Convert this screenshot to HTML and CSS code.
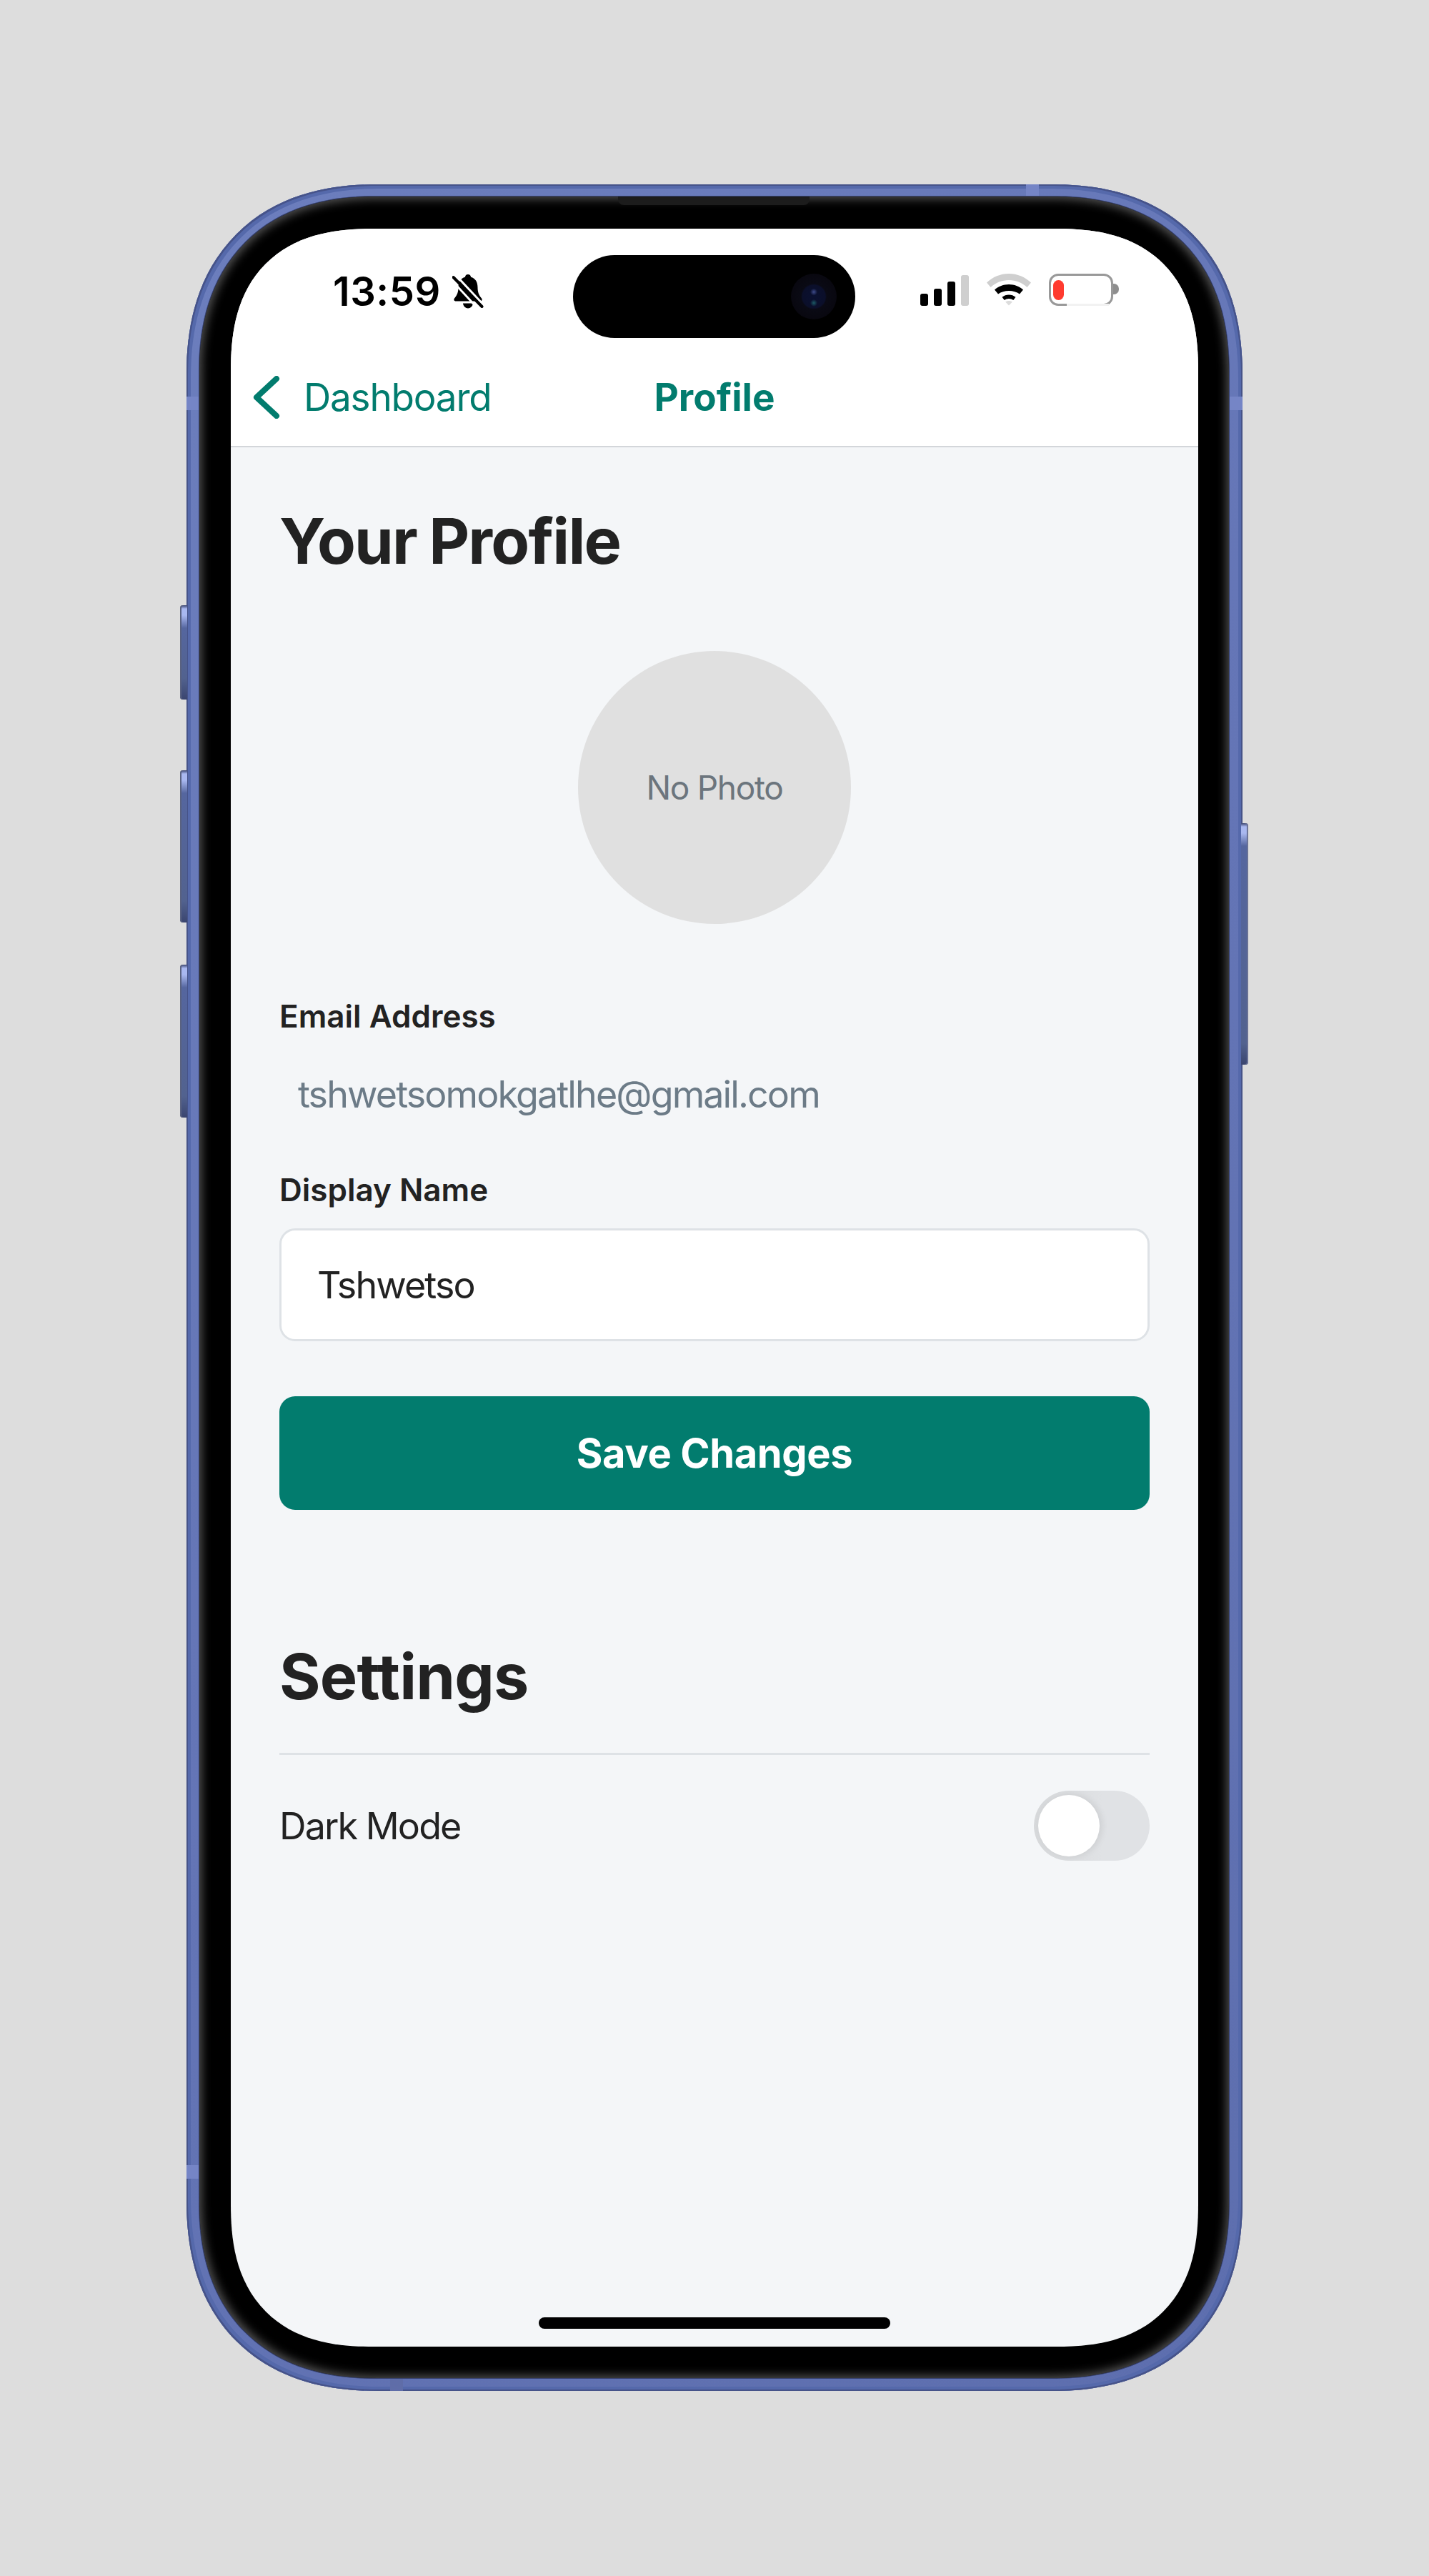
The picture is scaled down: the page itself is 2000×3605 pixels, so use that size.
FILE: index.html
```html
<!DOCTYPE html>
<html lang="en">
<head>
    <meta charset="UTF-8">
    <title>Profile</title>
    <link rel="stylesheet" href="styles.css">
</head>
<body>

<div class="phone">
    <span class="side-btn btn-action"></span>
    <span class="side-btn btn-up"></span>
    <span class="side-btn btn-down"></span>
    <span class="side-btn btn-power"></span>
    <span class="band band-left-top"></span>
    <span class="band band-right-top"></span>
    <span class="band band-left-bottom"></span>
    <span class="band band-top"></span>
    <span class="band band-bottom"></span>

    <div class="bezel">
        <span class="speaker"></span>
        <div class="screen">
            <div class="island"><span class="camera"></span></div>

            <div class="status-bar">
                <div class="status-left">
                    <span class="time">13:59</span>
                    <svg class="bell" viewBox="0 0 44 50" width="44" height="50">
                        <path d="M22 1c-2.400 0-4 1.700-4 3.800C11.500 6.500 8.500 12 8.500 19c0 6.500-1.500 11-5.500 15.500-1.400 1.600-.5 4 2 4h34c2.500 0 3.400-2.400 2-4-4-4.500-5.500-9-5.500-15.500 0-7-3-12.500-9.500-14.200C26 2.700 24.400 1 22 1z" fill="#000"/>
                        <path d="M15 41.500h14c-.4 4-3.500 7-7 7s-6.600-3-7-7z" fill="#000"/>
                        <path d="M3 0l40 43M-2 8l38 41" stroke="#fff" stroke-width="3"/>
                        <path d="M1.500 5l40 41" stroke="#000" stroke-width="4" stroke-linecap="round"/>
                    </svg>
                </div>
                <div class="status-right">
                    <div class="signal">
                        <span class="bar bar-1"></span>
                        <span class="bar bar-2"></span>
                        <span class="bar bar-3"></span>
                        <span class="bar bar-4"></span>
                    </div>
                    <svg class="wifi" viewBox="0 0 62 45" width="62" height="45">
                        <path d="M31 0C19 0 8.500 4.700 0 12.500l5.500 6.500C12.500 12.500 21.500 9 31 9s18.500 3.500 25.500 10l5.500-6.500C53.500 4.700 43 0 31 0z" fill="#cfcfcf"/>
                        <path d="M31 15c-7.500 0-14.500 2.700-20 7.500l5 6C20 25.500 25.300 24 31 24s11 1.500 15 4.500l5-6C45.500 17.700 38.500 15 31 15z" fill="#000"/>
                        <path d="M31 29.500c-3.600 0-6.800 1.200-9.500 3.300l3.200 4.200c1.800-1.300 4-2 6.300-2s4.500.7 6.300 2l3.200-4.200c-2.700-2.100-5.900-3.300-9.500-3.300z" fill="#000"/>
                        <path d="M31 38c-1.800 0-3.400.5-4.800 1.500L31 44.500l4.800-5C34.400 38.500 32.800 38 31 38z" fill="#dcdcdc"/>
                    </svg>
                    <div class="battery">
                        <div class="battery-body"><span class="battery-level"></span></div>
                        <span class="battery-tip"></span>
                    </div>
                </div>
            </div>

            <header class="nav-bar">
                <a class="back-link">
                    <svg class="chevron" viewBox="0 0 38 60" width="38" height="60">
                        <path d="M33 4L5 30l28 26" fill="none" stroke="#027c6e" stroke-width="8" stroke-linecap="round" stroke-linejoin="round"/>
                    </svg>
                    <span>Dashboard</span>
                </a>
                <h2 class="nav-title">Profile</h2>
            </header>

            <main class="main-content">
                <h1 class="section-title">Your Profile</h1>

                <div class="avatar">No Photo</div>

                <label class="field-label">Email Address</label>
                <p class="email">tshwetsomokgatlhe@gmail.com</p>

                <label class="field-label">Display Name</label>
                <div class="text-input">Tshwetso</div>

                <button class="save-btn">Save Changes</button>

                <h1 class="section-title settings-title">Settings</h1>
                <div class="setting-row">
                    <span>Dark Mode</span>
                    <span class="toggle"><span class="knob"></span></span>
                </div>
            </main>

            <span class="home-indicator"></span>
        </div>
    </div>
</div>

</body>
</html>
```

FILE: styles.css
```css
* {
    margin: 0;
    padding: 0;
    box-sizing: border-box;
}

body {
    font-family: 'Inter', sans-serif;
    background-color: #dddddd;
    height: 3605px;
    padding-top: 258px;
    overflow: hidden;
}

/* Phone frame */
.phone {
    position: relative;
    width: 1478px;
    height: 3088px;
    margin: 0 auto;
    padding: 17px 19px 18px 18px;
    border-radius: 268px;
    corner-shape: superellipse(1.2);
    background: linear-gradient(135deg, #6c7ebd 0%, #6475b6 50%, #5d6eae 100%);
    box-shadow: inset 0 0 0 2px #465389, inset 0 0 0 6px #5569ab;
}

.side-btn {
    position: absolute;
    width: 10px;
    border-radius: 4px 0 0 4px;
    background: linear-gradient(180deg, #39446f 0, #a9b8f0 5px, #a9b8f0 14px, #55669f 32px, #52628f calc(100% - 30px), #3a456f 100%);
    box-shadow: inset 2px 0 1px #5a6280;
}

.btn-action { left: -9px; top: 589px; height: 132px; }
.btn-up { left: -9px; top: 820px; height: 213px; }
.btn-down { left: -9px; top: 1092px; height: 214px; }

.btn-power {
    right: -8px;
    top: 894px;
    height: 338px;
    border-radius: 0 4px 4px 0;
    box-shadow: inset -2px 0 1px #6b7396;
}

.band {
    position: absolute;
    background-color: #7585c6;
}

.band-left-top { left: 0; top: 297px; width: 18px; height: 19px; }
.band-right-top { right: 0; top: 297px; width: 18px; height: 19px; }
.band-left-bottom { left: 0; top: 2772px; width: 18px; height: 19px; }
.band-top { left: 1175px; top: 0; width: 18px; height: 17px; }
.band-bottom { left: 285px; bottom: 0; width: 18px; height: 18px; background-color: #5f6da8; }

.bezel {
    position: relative;
    height: 100%;
    padding: 45px 43px 44px 44px;
    border-radius: 248px;
    corner-shape: superellipse(1.2);
    background-color: #000;
    box-shadow: inset 0 0 14px 3px #555, 0 0 0 1px #36416f;
}

.speaker {
    position: absolute;
    left: 586px;
    top: 0;
    width: 268px;
    height: 12px;
    border-radius: 0 0 8px 8px;
    background-color: #1c1c1c;
}

/* Screen */
.screen {
    position: relative;
    display: flex;
    flex-direction: column;
    height: 100%;
    overflow: hidden;
    border-radius: 200px;
    corner-shape: superellipse(1.3);
    background-color: #f4f6f8;
}

.island {
    position: absolute;
    left: 479px;
    top: 37px;
    width: 395px;
    height: 116px;
    border-radius: 58px;
    background-color: #000;
}

.camera {
    position: absolute;
    right: 26px;
    top: 26px;
    width: 64px;
    height: 64px;
    border-radius: 50%;
    background:
        radial-gradient(ellipse 5px 5px at 50% 40%, #3f4c8c 0, transparent 100%),
        radial-gradient(ellipse 5px 5px at 50% 64%, #1c5a66 0, transparent 100%),
        radial-gradient(circle at center, #0a1030 0, #0b0f2a 16px, #0a0a14 18px, #07050b 100%);
}

.status-bar {
    display: flex;
    justify-content: space-between;
    height: 178px;
    padding: 63px 111px 0 143px;
    background-color: #fff;
}

.status-left {
    display: flex;
    align-items: flex-start;
    gap: 16px;
}

.time {
    font-size: 56px;
    font-weight: 600;
    line-height: 50px;
    letter-spacing: 0.5px;
}

.bell {
    margin-top: 0;
}

.status-right {
    display: flex;
    align-items: flex-start;
}

.signal {
    display: flex;
    align-items: flex-end;
    gap: 8px;
    height: 43px;
    margin-top: 2px;
}

.bar {
    width: 11px;
    border-radius: 3px;
    background-color: #000;
}

.bar-1 { height: 17px; }
.bar-2 { height: 24px; }
.bar-3 { height: 34px; }
.bar-4 { height: 43px; background-color: #cfcfcf; }

.wifi {
    margin-left: 25px;
}

.battery {
    display: flex;
    align-items: center;
    margin-left: 25px;
    height: 45px;
}

.battery-body {
    position: relative;
    width: 90px;
    height: 45px;
    padding: 6px 0 0 3px;
    border: 3px solid #999;
    border-radius: 13px;
    background-color: #fff;
}

/* the lower edge of the outline fades out in the screenshot */
.battery-body::after {
    content: "";
    position: absolute;
    left: 22px;
    right: 3px;
    bottom: -3px;
    height: 3px;
    background-color: #f2f2f2;
}

.battery-level {
    display: block;
    width: 15px;
    height: 28px;
    border-radius: 8px;
    background-color: #ff3b2f;
}

.battery-tip {
    width: 8px;
    height: 15px;
    margin-bottom: 2px;
    border-radius: 0 7px 7px 0;
    background-color: #8e8e8e;
}

.nav-bar {
    position: relative;
    display: flex;
    justify-content: center;
    align-items: center;
    height: 128px;
    padding-bottom: 10px;
    border-bottom: 2px solid #d3d6da;
    background-color: #fff;
    color: #027c6e;
}

.back-link {
    position: absolute;
    left: 31px;
    top: 26px;
    display: flex;
    align-items: center;
    gap: 33px;
    font-size: 53px;
    letter-spacing: -1.2px;
}

.chevron {
    display: block;
}

.nav-title {
    font-size: 53px;
    font-weight: 700;
}

.main-content {
    display: flex;
    flex-direction: column;
    flex: 1;
    padding: 78px 68px 0;
    color: #222;
}

.section-title {
    font-size: 88px;
    font-weight: 700;
    line-height: 106px;
    letter-spacing: -1.8px;
    word-spacing: -2px;
}

.avatar {
    display: flex;
    justify-content: center;
    align-items: center;
    align-self: center;
    width: 382px;
    height: 382px;
    margin-top: 101px;
    border-radius: 50%;
    background-color: #e0e0e0;
    color: #6c757d;
    font-size: 46px;
    letter-spacing: -1.3px;
}

.field-label {
    margin-top: 102px;
    font-size: 44px;
    font-weight: 600;
    line-height: 54px;
}

.email {
    margin-top: 52px;
    padding-left: 26px;
    color: #6c7b87;
    font-size: 52px;
    line-height: 62px;
    letter-spacing: -1.9px;
}

.email + .field-label {
    margin-top: 75px;
}

.text-input {
    display: flex;
    align-items: center;
    height: 158px;
    margin-top: 27px;
    padding-left: 50px;
    border: 3px solid #dee2e6;
    border-radius: 22px;
    background-color: #fff;
    font-size: 52px;
    letter-spacing: -1.9px;
}

.save-btn {
    height: 159px;
    margin-top: 77px;
    border: none;
    border-radius: 22px;
    background-color: #027c6e;
    color: white;
    font-family: inherit;
    font-size: 56px;
    font-weight: 700;
    letter-spacing: -0.4px;
}

.settings-title {
    margin-top: 180px;
    letter-spacing: -0.8px;
}

.setting-row {
    display: flex;
    justify-content: space-between;
    align-items: center;
    margin-top: 54px;
    padding-top: 50px;
    border-top: 3px solid #dee2e6;
    font-size: 52px;
    letter-spacing: -1.9px;
}

.toggle {
    display: block;
    width: 162px;
    height: 98px;
    padding: 6px;
    border-radius: 49px;
    background: linear-gradient(90deg, #d6d8da 0, #e0e2e5 60%);
}

.knob {
    display: block;
    width: 86px;
    height: 86px;
    border-radius: 50%;
    background-color: #fff;
    box-shadow: 4px 0 10px rgba(0, 0, 0, 0.08);
}

.home-indicator {
    position: absolute;
    left: 431px;
    bottom: 25px;
    width: 492px;
    height: 16px;
    border-radius: 8px;
    background-color: #000;
}
```
